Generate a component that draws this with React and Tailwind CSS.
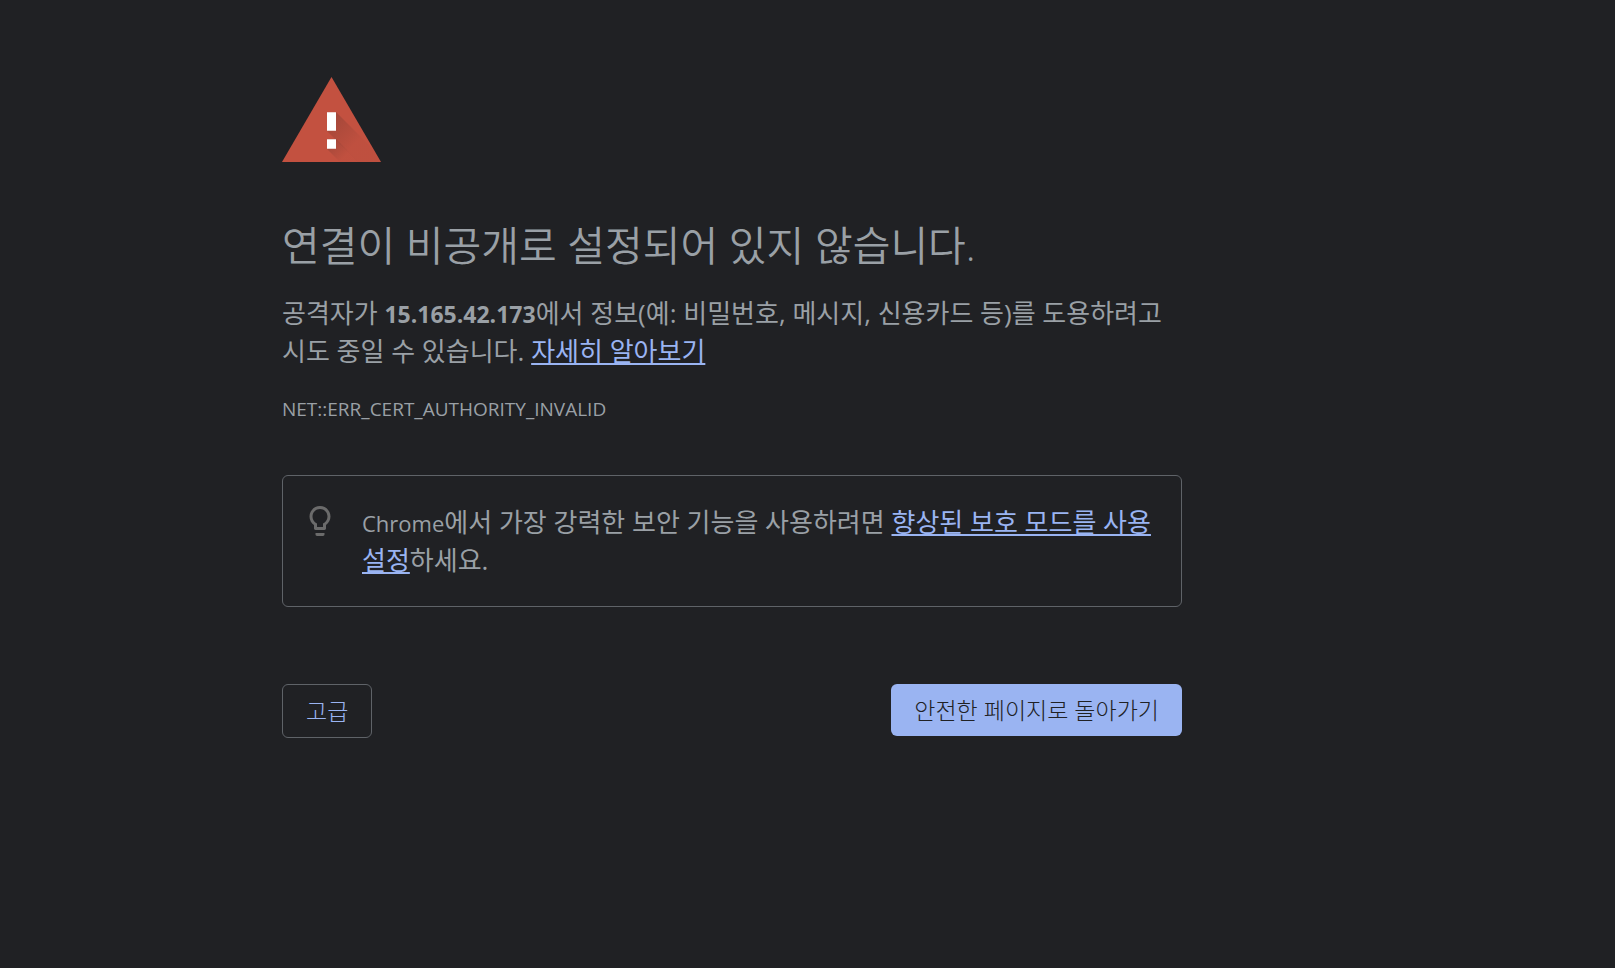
function WarningIcon() {
  return (
    <svg className="block h-[85px] w-[99px]" viewBox="0 0 99 85" aria-hidden="true">
      <defs>
        <linearGradient id="shade" gradientUnits="userSpaceOnUse" x1="48" y1="40" x2="74" y2="66">
          <stop offset="0" stopColor="#3e2723" stopOpacity="0.24" />
          <stop offset="1" stopColor="#3e2723" stopOpacity="0.03" />
        </linearGradient>
        <linearGradient id="shadeDot" gradientUnits="userSpaceOnUse" x1="48" y1="66" x2="62" y2="80">
          <stop offset="0" stopColor="#3e2723" stopOpacity="0.22" />
          <stop offset="1" stopColor="#3e2723" stopOpacity="0.02" />
        </linearGradient>
        <clipPath id="tri">
          <path d="M49.5 0 L99 85 H0 Z" />
        </clipPath>
      </defs>
      <path d="M49.5 0 L99 85 H0 Z" fill="#c35140" />
      <g clipPath="url(#tri)">
        <path d="M54 35 L104 85 H76 L45 54 V44 Z" fill="url(#shade)" />
        <path d="M54 62 L77 85 H58 L45 72 V62 Z" fill="url(#shadeDot)" />
      </g>
      <path d="M45 35.300 h9 v18.400 h-9 Z M45 62.300 h9 v9.400 h-9 Z" fill="#fff" />
    </svg>
  );
}

function BulbIcon() {
  return (
    <svg className="block size-9 shrink-0" viewBox="0 0 24 24" fill="#6b6b6b" aria-hidden="true">
      <path d="M9 21c0 .5.4 1 1 1h4c.6 0 1-.5 1-1v-1H9v1zm3-19C8.1 2 5 5.1 5 9c0 2.4 1.2 4.5 3 5.7V17c0 .5.4 1 1 1h6c.6 0 1-.5 1-1v-2.3c1.8-1.3 3-3.4 3-5.7 0-3.9-3.1-7-7-7zm2.9 11.1l-.9.6V16h-4v-2.3l-.9-.6C7.8 12.2 7 10.6 7 9c0-2.8 2.2-5 5-5s5 2.2 5 5c0 1.6-.8 3.2-2.1 4.1z" />
    </svg>
  );
}

export default function App() {
  return (
    <div className="min-h-screen bg-[#202124] pt-[77px] pb-12 font-['Open_Sans','Noto_Sans_CJK_KR',sans-serif] text-[26px] leading-[38px] text-[#9aa0a6] break-keep">
      <main className="ml-[282px] max-w-[900px]">
        <WarningIcon />
        <h1 className="mt-[55px] text-[41px] leading-[56px] font-[350]">연결이 비공개로 설정되어 있지 않습니다.</h1>
        <p className="mt-[21px]">
          공격자가 <strong className="text-[23px] leading-none font-bold">15.165.42.173</strong>에서 정보(예: 비밀번호, 메시지, 신용카드 등)를 도용하려고 시도 중일 수 있습니다.{" "}
          <a href="#learn-more" className="text-[#9ab4f2] underline decoration-2 underline-offset-2">자세히 알아보기</a>
        </p>
        <p className="mt-[23px] text-[19px] leading-8">NET::ERR_CERT_AUTHORITY_INVALID</p>
        <section className="mt-[50px] flex gap-6 rounded-md border border-[#5f6368] px-[19px] py-[27px]">
          <BulbIcon />
          <p>
            <span className="text-[22px] leading-none">Chrome</span>에서 가장 강력한 보안 기능을 사용하려면{" "}
            <a href="#enhanced-protection" className="text-[#9ab4f2] underline decoration-2 underline-offset-2">향상된 보호 모드를 사용 설정</a>하세요.
          </p>
        </section>
        <div className="mt-[77px] flex items-start justify-between">
          <button type="button" className="rounded-md border border-[#5f6368] px-[23px] py-2 text-[23px] leading-9 font-light text-[#9ab4f2]">고급</button>
          <button type="button" className="rounded-md bg-[#9ab4f2] px-[23px] py-2 text-[23px] leading-9 font-light text-[#202124]">안전한 페이지로 돌아가기</button>
        </div>
      </main>
    </div>
  );
}
